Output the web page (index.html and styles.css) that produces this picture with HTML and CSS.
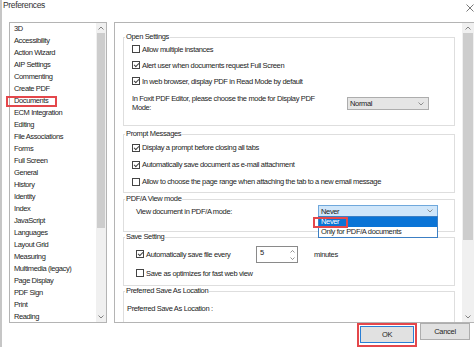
FILE: index.html
```html
<!DOCTYPE html>
<html lang="en">
<head>
    <meta charset="UTF-8">
    <title>Preferences</title>
    <link rel="stylesheet" href="styles.css">
</head>
<body>
    <div class="titlebar">
        <span class="title">Preferences</span>
        <svg class="close" width="8" height="8" viewBox="0 0 8 8"><path d="M0.5 0.5L7.5 7.5M7.5 0.5L0.5 7.5" stroke="#555" stroke-width="0.8" fill="none"/></svg>
    </div>

    <div class="main">
        <div class="nav">
            <ul class="nav-list">
                <li>3D</li>
                <li>Accessibility</li>
                <li>Action Wizard</li>
                <li>AIP Settings</li>
                <li>Commenting</li>
                <li>Create PDF</li>
                <li class="marked">Documents</li>
                <li>ECM Integration</li>
                <li>Editing</li>
                <li>File Associations</li>
                <li>Forms</li>
                <li>Full Screen</li>
                <li>General</li>
                <li>History</li>
                <li>Identity</li>
                <li>Index</li>
                <li>JavaScript</li>
                <li>Languages</li>
                <li>Layout Grid</li>
                <li>Measuring</li>
                <li>Multimedia (legacy)</li>
                <li>Page Display</li>
                <li>PDF Sign</li>
                <li>Print</li>
                <li>Reading</li>
            </ul>
            <div class="scrollbar nav-scroll">
                <span class="arrow"><svg width="6" height="4" viewBox="0 0 6 4"><path d="M0.5 3.5L3 1L5.5 3.5" stroke="#666" stroke-width="0.8" fill="none"/></svg></span>
                <span class="thumb"></span>
                <span class="track"></span>
                <span class="arrow"><svg width="6" height="4" viewBox="0 0 6 4"><path d="M0.5 0.5L3 3L5.5 0.5" stroke="#666" stroke-width="0.8" fill="none"/></svg></span>
            </div>
        </div>

        <div class="panel">
            <div class="panel-body">
                <fieldset class="group g-open">
                    <legend>Open Settings</legend>
                    <div class="row"><span class="cb"></span>Allow multiple instances</div>
                    <div class="row"><span class="cb on"></span>Alert user when documents request Full Screen</div>
                    <div class="row"><span class="cb on"></span>In web browser, display PDF in Read Mode by default</div>
                    <div class="row mode-row">
                        <span class="mode-text">In Foxit PDF Editor, please choose the mode for Display PDF Mode:</span>
                        <span class="select select-normal">Normal
                            <svg width="6" height="4" viewBox="0 0 6 4"><path d="M0.5 0.5L3 3L5.5 0.5" stroke="#777" stroke-width="0.8" fill="none"/></svg>
                        </span>
                    </div>
                </fieldset>

                <fieldset class="group g-prompt">
                    <legend>Prompt Messages</legend>
                    <div class="row"><span class="cb on"></span>Display a prompt before closing all tabs</div>
                    <div class="row"><span class="cb on"></span>Automatically save document as e-mail attachment</div>
                    <div class="row"><span class="cb"></span>Allow to choose the page range when attaching the tab to a new email message</div>
                </fieldset>

                <fieldset class="group g-pdfa">
                    <legend>PDF/A View mode</legend>
                    <div class="row indent">
                        <span>View document in PDF/A mode:</span>
                        <span class="select select-never">Never
                            <svg width="6" height="4" viewBox="0 0 6 4"><path d="M0.5 0.5L3 3L5.5 0.5" stroke="#777" stroke-width="0.8" fill="none"/></svg>
                            <span class="dropdown">
                                <span class="option active">Never</span>
                                <span class="option">Only for PDF/A documents</span>
                            </span>
                        </span>
                    </div>
                </fieldset>

                <fieldset class="group g-save">
                    <legend>Save Setting</legend>
                    <div class="row indent autosave">
                        <span class="autosave-label"><span class="cb on"></span>Automatically save file every</span>
                        <span class="spin">5
                            <span class="spin-arrows">
                                <svg width="5" height="3" viewBox="0 0 5 3"><path d="M0.5 2.5L2.5 0.5L4.5 2.5" stroke="#666" stroke-width="0.7" fill="none"/></svg>
                                <svg width="5" height="3" viewBox="0 0 5 3"><path d="M0.5 0.5L2.5 2.5L4.5 0.5" stroke="#666" stroke-width="0.7" fill="none"/></svg>
                            </span>
                        </span>
                        <span class="minutes">minutes</span>
                    </div>
                    <div class="row indent"><span class="cb"></span>Save as optimizes for fast web view</div>
                </fieldset>

                <fieldset class="group g-location">
                    <legend>Preferred Save As Location</legend>
                    <div class="row location">Preferred Save As Location :</div>
                </fieldset>
            </div>
            <div class="scrollbar panel-scroll">
                <span class="arrow"><svg width="6" height="4" viewBox="0 0 6 4"><path d="M0.5 3.5L3 1L5.5 3.5" stroke="#666" stroke-width="0.8" fill="none"/></svg></span>
                <span class="thumb"></span>
                <span class="track"></span>
                <span class="arrow"><svg width="6" height="4" viewBox="0 0 6 4"><path d="M0.5 0.5L3 3L5.5 0.5" stroke="#666" stroke-width="0.8" fill="none"/></svg></span>
            </div>
        </div>
    </div>

    <div class="footer">
        <span class="focus-mark"><button class="btn btn-ok">OK</button></span>
        <button class="btn">Cancel</button>
    </div>
</body>
</html>
```

FILE: styles.css
```css
html, body {
    margin: 0;
    height: 100%;
    overflow: hidden;
}

body {
    width: 474px;
    height: 347px;
    box-sizing: border-box;
    border-left: 2px solid #c6c6c6;
    background-color: #ffffff;
    font-family: 'Liberation Sans', Arial, sans-serif;
    font-size: 7.5px;
    letter-spacing: -0.35px;
    color: #1c1c1c;
}

.titlebar {
    height: 22px;
    display: flex;
    justify-content: space-between;
    align-items: flex-start;
    padding-left: 1px;
    padding-right: 0;
    box-sizing: border-box;
}

.title {
    font-size: 8.5px;
    letter-spacing: -0.35px;
    line-height: 10px;
    color: #333;
}

.close {
    margin-top: 4px;
}

.main {
    display: flex;
    gap: 7px;
    height: 301px;
    padding-left: 7px;
}

.nav {
    width: 98px;
    box-sizing: border-box;
    border: 1px solid #b4b4b4;
    display: flex;
}

.nav-list {
    flex: 1;
    list-style: none;
    margin: 0;
    padding: 0 0 0 4px;
    letter-spacing: -0.4px;
    clip-path: inset(0 0 0 -12px);
}

.nav-list li {
    line-height: 12px;
    white-space: nowrap;
}

.marked {
    position: relative;
}

.marked::before {
    content: "";
    position: absolute;
    left: -8px;
    top: 1px;
    width: 51px;
    height: 11px;
    box-sizing: border-box;
    border: 2px solid #e4474b;
}

.scrollbar {
    display: flex;
    flex-direction: column;
    background-color: #f0f0f0;
}

.scrollbar .arrow {
    height: 10px;
    display: flex;
    align-items: center;
    justify-content: center;
}

.scrollbar .thumb {
    background-color: #cdcdcd;
    margin: 0 1px;
}

.scrollbar .track {
    flex: 1;
}

.nav-scroll {
    width: 10px;
}

.nav-scroll .thumb {
    height: 195px;
}

.panel {
    flex: 1;
    display: flex;
    border: 1px solid #b4b4b4;
    border-right: none;
}

.panel-body {
    flex: 1;
    padding: 10px 7px 0 8px;
    overflow: hidden;
}

.panel-scroll {
    width: 12px;
}

.panel-scroll .thumb {
    height: 207px;
}

.group {
    margin: 0;
    border: 1px solid #dedede;
    padding: 0 0 0 8px;
    min-width: 0;
}

.group legend {
    line-height: 8px;
    padding: 0 1px;
    margin-left: -7px;
}

.row {
    display: flex;
    align-items: center;
    height: 16px;
    white-space: nowrap;
}

.indent {
    padding-left: 4px;
}

.cb {
    width: 8px;
    height: 8px;
    box-sizing: border-box;
    border: 1px solid #444;
    margin-right: 2px;
    position: relative;
    flex-shrink: 0;
}

.cb.on::after {
    content: "";
    position: absolute;
    left: 1px;
    top: 1px;
    width: 4px;
    height: 2px;
    border-left: 1px solid #444;
    border-bottom: 1px solid #444;
    transform: rotate(-45deg);
}

.select {
    display: flex;
    align-items: center;
    justify-content: space-between;
    box-sizing: border-box;
    padding: 0 4px 0 2px;
    position: relative;
}

.g-open {
    padding-bottom: 13px;
}

.mode-row {
    height: 17px;
    margin-top: 6px;
}

.mode-text {
    width: 192px;
    white-space: normal;
    line-height: 8.5px;
}

.select-normal {
    width: 82px;
    height: 13px;
    margin-left: auto;
    margin-right: 25px;
    background-color: #e5e5e5;
    border: 1px solid #adadad;
}

.g-prompt {
    margin-top: 4px;
    padding-top: 1px;
    padding-bottom: 2px;
}

.g-prompt .row {
    height: 17px;
}

.g-pdfa {
    margin-top: 2px;
    padding-bottom: 12px;
}

.select-never {
    width: 120px;
    height: 12px;
    margin-left: auto;
    margin-right: 16px;
    background-color: #cfe6fa;
    border: 1px solid #6fa8dc;
}

.dropdown {
    position: absolute;
    left: -1px;
    right: -1px;
    top: 10px;
    display: flex;
    flex-direction: column;
    background-color: #ffffff;
    border: 1px solid #3c7fc4;
    z-index: 2;
}

.option {
    height: 10px;
    line-height: 10px;
    padding-left: 2px;
    color: #1e1e1e;
}

.option.active {
    background-color: #0a74d6;
    color: #ffffff;
    position: relative;
}

.option.active::before {
    content: "";
    position: absolute;
    left: -6px;
    top: 0;
    width: 35px;
    height: 11px;
    box-sizing: border-box;
    border: 2px solid #e4474b;
}

.g-save {
    margin-top: 1px;
    padding-bottom: 4px;
}

.autosave {
    height: 18px;
    margin-top: 4px;
}

.autosave + .row {
    margin-top: 2px;
}

.autosave-label {
    display: flex;
    align-items: center;
    width: 120px;
}

.spin {
    width: 42px;
    height: 17px;
    box-sizing: border-box;
    border: 1px solid #8a8a8a;
    display: flex;
    justify-content: space-between;
    align-items: flex-start;
    padding: 1px 2px 0 3px;
}

.spin-arrows {
    display: flex;
    flex-direction: column;
    gap: 4px;
    padding-top: 2px;
}

.minutes {
    margin-left: 16px;
}

.g-location {
    margin-top: 1px;
    height: 40px;
}

.location {
    margin-top: 5px;
    margin-left: -5px;
}

.footer {
    display: flex;
    justify-content: flex-end;
    align-items: flex-start;
    gap: 3px;
    padding-right: 4px;
}

.focus-mark {
    border: 2px solid #e4474b;
    padding: 1px 1px 2px 1px;
}

.btn {
    width: 50px;
    height: 17px;
    margin: 0;
    padding: 0;
    font-family: inherit;
    font-size: 7.5px;
    letter-spacing: -0.3px;
    color: #262626;
    background-color: #e1e1e1;
    border: 1px solid #adadad;
}

.btn-ok {
    width: 54px;
    border-color: #2a7fd4;
}
```
